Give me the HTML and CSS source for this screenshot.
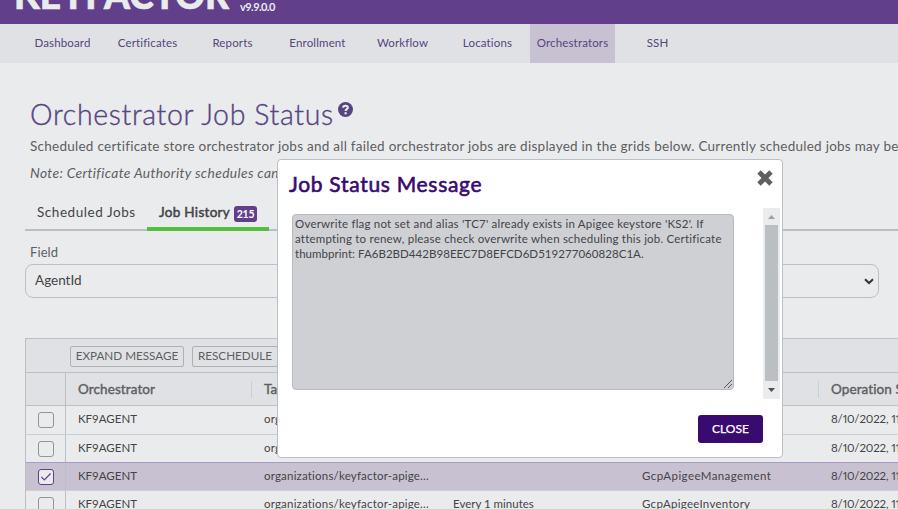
FILE: index.html
```html
<!DOCTYPE html>
<html lang="en">
<head>
<meta charset="utf-8">
<title>Orchestrator Job Status</title>
<link rel="stylesheet" href="styles.css">
</head>
<body>
<header class="brand"><span class="logo">KEYFACTOR</span><span class="version">v9.9.0.0</span></header>
<nav class="nav">
<a>Dashboard</a><a>Certificates</a><a>Reports</a><a>Enrollment</a><a>Workflow</a><a>Locations</a><a class="active">Orchestrators</a><a>SSH</a>
</nav>
<main class="page">
<div class="heading">
<h1>Orchestrator Job Status</h1>
<svg class="help" viewBox="0 0 14 14"><circle cx="7" cy="7" r="7" fill="#554580"/><path d="M4.8 5.4C4.8 3 9.2 2.9 9.2 5.2C9.2 6.7 7.1 6.6 7.1 8.5" fill="none" stroke="#eaebed" stroke-width="1.9"/><rect x="6.1" y="9.5" width="2" height="2" fill="#eaebed"/></svg>
</div>
<p class="intro">Scheduled certificate store orchestrator jobs and all failed orchestrator jobs are displayed in the grids below. Currently scheduled jobs may be</p>
<p class="note">Note: Certificate Authority schedules can</p>
<div class="tabs">
<div class="tab">Scheduled Jobs</div>
<div class="tab current"><span>Job History</span><span class="count">215</span></div>
</div>
<div class="field-label">Field</div>
<div class="select"><span>AgentId</span><svg viewBox="0 0 10 7"><path d="M1 1.2L5 5L9 1.2" fill="none" stroke="#333" stroke-width="2"/></svg></div>
<section class="grid">
<div class="toolbar"><button class="expand">EXPAND MESSAGE</button><button class="resched">RESCHEDULE</button></div>
<div class="row head"><div class="check"></div><div>Orchestrator</div><div class="split">Target</div><div></div><div></div><div class="split">Operation Start</div></div>
<div class="row"><div class="check"><i class="box"></i></div><div>KF9AGENT</div><div class="path">organizations/keyfactor-apige...</div><div></div><div></div><div class="date">8/10/2022, 11:30</div></div>
<div class="row"><div class="check"><i class="box"></i></div><div>KF9AGENT</div><div class="path">organizations/keyfactor-apige...</div><div></div><div></div><div class="date">8/10/2022, 11:30</div></div>
<div class="row selected"><div class="check"><i class="box"><svg viewBox="0 0 14 14"><path d="M2.3 6.8L5.3 9.8L11.6 3.5" fill="none" stroke="#5b4485" stroke-width="1.2"/></svg></i></div><div>KF9AGENT</div><div class="path">organizations/keyfactor-apige...</div><div></div><div class="type">GcpApigeeManagement</div><div class="date">8/10/2022, 11:30</div></div>
<div class="row"><div class="check"><i class="box"></i></div><div>KF9AGENT</div><div class="path">organizations/keyfactor-apige...</div><div>Every 1 minutes</div><div class="type inventory">GcpApigeeInventory</div><div class="date">8/10/2022, 11:30</div></div>
</section>
</main>
<div class="modal">
<div class="modal-head"><h2>Job Status Message</h2>
<svg viewBox="0 0 18 16"><path d="M3 2L15 14M15 2L3 14" fill="none" stroke="#5d5f61" stroke-width="4.8"/></svg></div>
<div class="modal-body">
<div class="message"><div class="l1">Overwrite flag not set and alias 'TC7' already exists in Apigee keystore 'KS2'. If</div><div class="l1">attempting to renew, please check overwrite when scheduling this job. Certificate</div><div class="l3">thumbprint: FA6B2BD442B98EEC7D8EFCD6D519277060828C1A.</div>
<svg class="grip" viewBox="0 0 10 10"><path d="M1 9L9 1M5 9L9 5" fill="none" stroke="#555" stroke-width="1"/></svg></div>
<div class="scrollbar"><svg viewBox="0 0 17 17"><path d="M5 11L8.5 7L12 11Z" fill="#a0a3a6"/></svg><div class="thumb"></div><svg viewBox="0 0 17 17"><path d="M5 7L12 7L8.5 11Z" fill="#505050"/></svg></div>
</div>
<button class="close">CLOSE</button>
</div>
</body>
</html>
```
FILE: styles.css
```css
* { box-sizing: border-box; }
html, body { margin: 0; width: 898px; height: 509px; overflow: hidden; }
body { position: relative; background: #eaebed; color: #444446; font-family: Lato, "Liberation Sans", sans-serif; font-size: 11.5px; white-space: nowrap; }
h1, h2, p { margin: 0; }
button { font-family: inherit; padding: 0; margin: 0; }
.brand { height: 24px; background: #613f8a; display: flex; overflow: hidden; color: #eaebed; }
.logo { width: 225px; margin: -25px 0 0 14px; font-weight: 900; font-size: 37px; line-height: 40px; -webkit-text-stroke: .6px #eaebed; }
.version { font-size: 11px; font-weight: 700; line-height: 13px; margin-left: 1px; letter-spacing: -.55px; }
.nav { height: 39px; background: #e0e1e4; display: flex; padding-left: 20px; }
.nav a { width: 85px; text-align: center; line-height: 38px; color: #554580; font-size: 11.5px; letter-spacing: .15px; }
.nav .active { background: #c8c1d2; }
.page { width: 898px; overflow: hidden; padding-left: 25px; }
.heading { display: flex; height: 67px; padding: 33px 0 0 5px; color: #554580; }
h1 { font-size: 28.5px; line-height: 36px; font-weight: 300; letter-spacing: .65px; width: 308px; -webkit-text-stroke: .35px; }
.help { width: 15px; height: 15px; margin-top: 6px; }
.intro { padding-left: 5px; height: 33px; line-height: 33px; font-size: 13.5px; color: #5d5f61; letter-spacing: .26px; }
.note { padding-left: 5px; height: 20px; line-height: 20px; font-size: 13.8px; font-style: italic; color: #5d5f61; letter-spacing: .36px; }
.tabs { display: flex; height: 48px; border-bottom: 2px solid #bcbfc2; }
.tab { width: 122px; height: 48px; padding: 17px 0 0 12px; font-size: 13.5px; line-height: 24px; display: flex; letter-spacing: .55px; }
.current { border-bottom: 4px solid #55bd40; letter-spacing: .3px; -webkit-text-stroke: .5px; }
.count { height: 16px; width: 23px; margin: 6px 12px 0 auto; border-radius: 3px; background: #613f8a; color: #fff; font-size: 10.5px; font-weight: 700; line-height: 16px; text-align: center; letter-spacing: -.3px; -webkit-text-stroke: 0; }
.field-label { height: 33px; padding: 13px 0 0 5px; font-size: 13px; line-height: 17px; color: #5d5f61; letter-spacing: .1px; }
.select { width: 854px; height: 34px; border: 1px solid #bcbfc5; border-radius: 8px; display: flex; align-items: center; justify-content: space-between; padding: 0 4px 0 9px; font-size: 13.5px; }
.select span { padding-bottom: 3px; }
.select svg { width: 10px; height: 7px; }
.grid { width: 1100px; margin-top: 40px; border: 1px solid #bcbfc2; border-bottom: 0; }
.toolbar { height: 33px; display: flex; align-items: center; gap: 8px; padding: 2px 0 0 44px; background: #e0e1e4; }
.toolbar button { height: 21px; padding-bottom: 3px; border: 1px solid #afb1b5; border-radius: 2px; background: transparent; color: #5d5f61; font-size: 11.7px; }
.expand { width: 114px; }
.resched { width: 86px; }
.row { display: grid; grid-template-columns: 40px 186px 189px 189px 189px 1fr; height: 28px; align-items: center; border-top: 1px solid #cccfd2; }
.row > div { padding: 0 0 2px 12px; }
.row .check { align-self: stretch; padding: 0 0 0 12px; border-right: 1px solid #bcbfc5; display: flex; align-items: center; }
.head { height: 33px; background: #e0e1e4; border-color: #bcbfc2; color: #5d5f61; font-size: 13.5px; -webkit-text-stroke: .4px; letter-spacing: .1px; }
.head > div { padding-bottom: 0; }
.head .split { border-left: 1px solid #cccfd2; line-height: 17px; margin-left: -1px; padding-bottom: 0; }
.head + .row { height: 29px; border-color: #bcbfc2; }
.head + .row > div:not(.check) { padding-bottom: 3px; }
.path { letter-spacing: .19px; }
.type { letter-spacing: .42px; }
.inventory { letter-spacing: .28px; }
.date { font-feature-settings: "pnum"; letter-spacing: -.15px; }
.box { width: 16px; height: 16px; border: 1px solid #929699; border-radius: 3px; flex: none; }
.box svg { display: block; }
.selected { background: #c8c1d2; border-color: #aa9bc0; }
.selected .box { border-color: #613f8a; background: #eaebed; }
.modal { position: absolute; left: 277px; top: 159px; width: 506px; height: 299px; border: 1px solid #bcbfc5; border-radius: 4px; background: #fff; }
.modal-head { height: 48px; display: flex; justify-content: space-between; padding: 10px 8px 0 11px; }
.modal-head svg { width: 18px; height: 16px; }
h2 { font-size: 21px; line-height: 28px; color: #390b70; font-weight: 400; -webkit-text-stroke: .6px; letter-spacing: .7px; }
.modal-body { height: 191px; display: flex; justify-content: space-between; padding: 0 2px 0 14px; }
.message { position: relative; width: 442px; height: 176px; margin-top: 6px; border: 1px solid #b9babf; border-radius: 4px; background: #cfd0d4; padding: 1px 2px; font-size: 11.5px; line-height: 15px; }
.l1 { letter-spacing: .21px; }
.l3 { letter-spacing: .04px; }
.grip { position: absolute; right: 0; bottom: 0; width: 10px; height: 10px; }
.scrollbar { width: 17px; height: 191px; background: #eaebed; }
.scrollbar svg { display: block; width: 17px; height: 17px; }
.thumb { width: 13px; height: 156px; margin-left: 2px; background: #bcbfc2; }
.close { display: block; width: 65px; height: 28px; margin: 16px 0 0 420px; padding-bottom: 2px; border: 0; border-radius: 3px; background: #390b70; color: #fff; font-size: 12px; -webkit-text-stroke: .25px; }
```
